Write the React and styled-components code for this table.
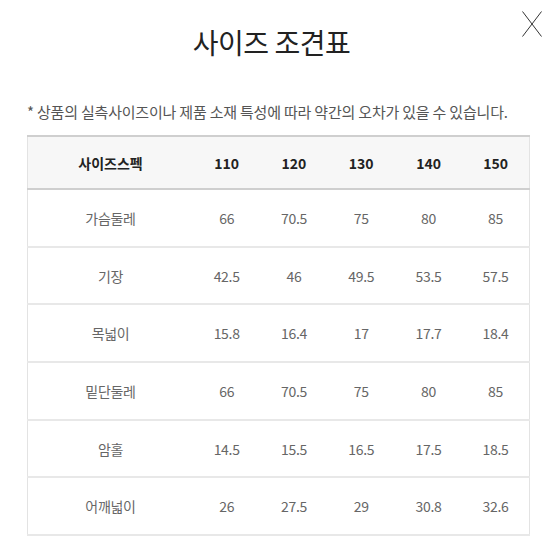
import React from 'react'
import styled, { createGlobalStyle } from 'styled-components'

const GlobalStyle = createGlobalStyle`
  body {
    margin: 0;
    background: #fff;
    font-family: "Noto Sans CJK KR", "Noto Sans", sans-serif;
  }
`

const Modal = styled.div`
  position: relative;
  width: 550px;
  height: 550px;
  padding: 25px 20px 0 27px;
  box-sizing: border-box;
`

const Title = styled.h1`
  margin: 0;
  text-align: center;
  font-size: 28px;
  line-height: 34px;
  font-weight: 400;
  color: #222;
  letter-spacing: -0.5px;
  padding-right: 14px;
`

const Close = styled.button`
  position: absolute;
  top: 11px;
  right: 8px;
  width: 20px;
  height: 26px;
  padding: 0;
  border: none;
  background: none;
  cursor: pointer;
`

const Note = styled.p`
  margin: 43px 0 13px;
  font-size: 15px;
  line-height: 20px;
  color: #555;
  letter-spacing: -0.2px;
`

const Table = styled.table`
  width: 503px;
  border-collapse: collapse;
  table-layout: fixed;
  border: 1px solid #e3e3e3;
  border-top: 2px solid #cfcfcf;
`

const Th = styled.th`
  height: 51px;
  padding: 0;
  background: #f7f7f7;
  border-bottom: 2px solid #cfcfcf;
  font-size: 14px;
  font-weight: 700;
  color: #222;
  text-align: center;
  width: ${p => (p.$first ? '165px' : 'auto')};
`

const Td = styled.td`
  height: 55.7px;
  padding: 0;
  border-bottom: 2px solid #e8e8e8;
  font-size: 14px;
  color: #666;
  text-align: center;
  letter-spacing: -0.3px;
`

const sizes = ['110', '120', '130', '140', '150']

const rows = [
  ['가슴둘레', '66', '70.5', '75', '80', '85'],
  ['기장', '42.5', '46', '49.5', '53.5', '57.5'],
  ['목넓이', '15.8', '16.4', '17', '17.7', '18.4'],
  ['밑단둘레', '66', '70.5', '75', '80', '85'],
  ['암홀', '14.5', '15.5', '16.5', '17.5', '18.5'],
  ['어깨넓이', '26', '27.5', '29', '30.8', '32.6'],
]

export default function App() {
  return (
    <>
      <GlobalStyle />
      <Modal>
        <Close aria-label="닫기">
          <svg width="20" height="26" viewBox="0 0 20 26">
            <path d="M0.5 0.5 L19.5 25.5 M19.5 0.5 L0.5 25.5" stroke="#333" strokeWidth="1" fill="none" />
          </svg>
        </Close>
        <Title>사이즈 조견표</Title>
        <Note>* 상품의 실측사이즈이나 제품 소재 특성에 따라 약간의 오차가 있을 수 있습니다.</Note>
        <Table>
          <thead>
            <tr>
              <Th $first>사이즈스펙</Th>
              {sizes.map(s => (
                <Th key={s}>{s}</Th>
              ))}
            </tr>
          </thead>
          <tbody>
            {rows.map(row => (
              <tr key={row[0]}>
                {row.map((cell, i) => (
                  <Td key={i}>{cell}</Td>
                ))}
              </tr>
            ))}
          </tbody>
        </Table>
      </Modal>
    </>
  )
}
